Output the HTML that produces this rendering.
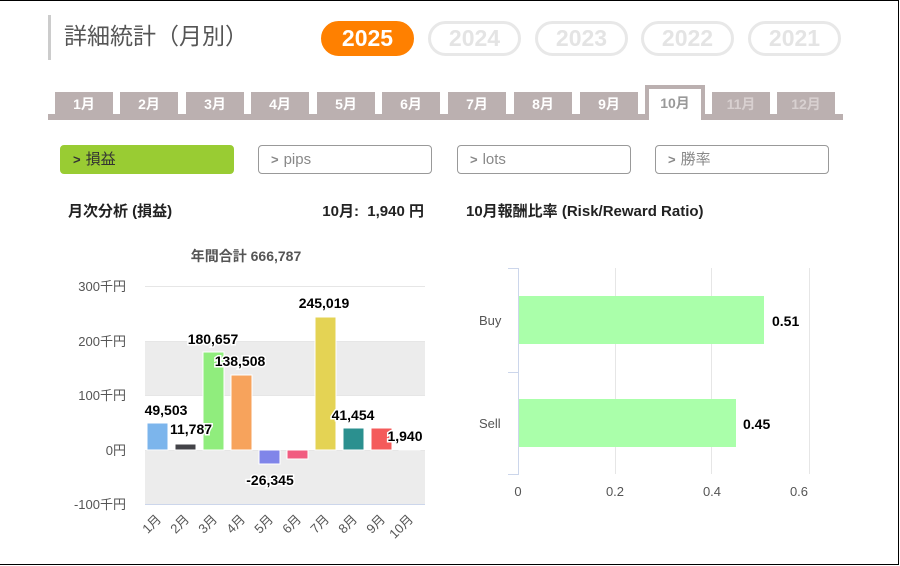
<!DOCTYPE html>
<html><head><meta charset="utf-8"><style>
*{margin:0;padding:0;box-sizing:border-box}
body{width:900px;height:566px;background:#fff;position:relative;overflow:hidden;font-family:"Liberation Sans","Noto Sans CJK JP",sans-serif}
.frame{position:absolute;left:0;top:0;width:899px;height:565px;border:1px solid #000;border-left:none}
.abs{position:absolute}
.title{left:48px;top:15px;height:45px;border-left:3px solid #ccc;padding-left:13px;font-size:23px;color:#555;line-height:42px}
.pill{position:absolute;top:21px;height:35px;width:93px;border-radius:18px;border:3px solid #e8e8e8;color:#e4e4e4;font-weight:bold;font-size:23px;text-align:center;line-height:29px}
.pill.on{background:#ff8000;border-color:#ff8000;color:#fff}
.tab{position:absolute;top:92px;height:24px;width:58px;background:#bbb0b0;color:#fff;font-weight:bold;font-size:14px;text-align:center;line-height:24px}
.tab.dim{color:#d8d0d0}
.btn{position:absolute;top:145px;height:29px;width:174px;border:1px solid #999;border-radius:4px;font-size:15px;color:#888;padding-left:12px;line-height:27px}
.btn b{font-size:13px;margin-right:5px}
.h{position:absolute;top:200px;font-size:15px;font-weight:bold;color:#222}
</style></head><body>
<div class="frame"></div>
<div class="abs title">詳細統計（月別）</div>
<div class="pill on" style="left:321px">2025</div>
<div class="pill" style="left:428px">2024</div>
<div class="pill" style="left:535px">2023</div>
<div class="pill" style="left:641px">2022</div>
<div class="pill" style="left:748px">2021</div>

<div class="abs" style="left:48px;top:114px;width:795px;height:6px;background:#bbb0b0"></div>
<div class="tab" style="left:55px">1月</div>
<div class="tab" style="left:120px">2月</div>
<div class="tab" style="left:186px">3月</div>
<div class="tab" style="left:251px">4月</div>
<div class="tab" style="left:317px">5月</div>
<div class="tab" style="left:382px">6月</div>
<div class="tab" style="left:448px">7月</div>
<div class="tab" style="left:514px">8月</div>
<div class="tab" style="left:580px">9月</div>
<div class="abs" style="left:645px;top:85px;width:60px;height:35px;background:#fff;border:4px solid #bbb0b0;border-bottom:none;color:#999;font-weight:bold;font-size:14px;text-align:center;line-height:28px">10月</div>
<div class="tab dim" style="left:712px">11月</div>
<div class="tab dim" style="left:777px">12月</div>

<div class="btn" style="left:60px;background:#99cc33;border-color:#99cc33;color:#333"><b>&gt;</b>損益</div>
<div class="btn" style="left:258px"><b>&gt;</b>pips</div>
<div class="btn" style="left:457px"><b>&gt;</b>lots</div>
<div class="btn" style="left:655px"><b>&gt;</b>勝率</div>

<div class="h" style="left:68px">月次分析 (損益)</div>
<div class="h" style="right:476px">10月:&nbsp; 1,940 円</div>
<div class="h" style="left:466px">10月報酬比率 (Risk/Reward Ratio)</div>

<svg class="abs" style="left:0;top:0" width="900" height="566" font-family="Liberation Sans,Noto Sans CJK JP,sans-serif">
<text x="246" y="261" font-size="14" font-weight="bold" fill="#555" text-anchor="middle">年間合計 666,787</text>
<rect x="145" y="341" width="280" height="54" fill="#ececec"/>
<rect x="145" y="450" width="280" height="54" fill="#ececec"/>
<g stroke="#e6e6e6"><line x1="145" y1="286.5" x2="425" y2="286.5"/><line x1="145" y1="341.5" x2="425" y2="341.5"/><line x1="145" y1="395.5" x2="425" y2="395.5"/><line x1="145" y1="450.5" x2="425" y2="450.5"/></g>
<line x1="145" y1="504.5" x2="425" y2="504.5" stroke="#ccd6eb"/>
<g font-size="13" fill="#555" text-anchor="end">
<text x="126" y="291">300千円</text><text x="126" y="346">200千円</text><text x="126" y="400">100千円</text><text x="126" y="455">0円</text><text x="126" y="509">-100千円</text></g>
<g stroke="#fff" stroke-width="1">
<rect x="147" y="423" width="21" height="27" fill="#7cb5ec"/>
<rect x="175" y="444" width="21" height="6" fill="#434348"/>
<rect x="203" y="352" width="21" height="98" fill="#90ed7d"/>
<rect x="231" y="375" width="21" height="75" fill="#f7a35c"/>
<rect x="259" y="450" width="21" height="14" fill="#8085e9"/>
<rect x="287" y="450" width="21" height="9" fill="#f15c80"/>
<rect x="315" y="317" width="21" height="133" fill="#e4d354"/>
<rect x="343" y="428" width="21" height="22" fill="#2b908f"/>
<rect x="371" y="428" width="21" height="22" fill="#f45b5b"/>
<rect x="399" y="449" width="21" height="1" fill="#91e8e1"/>
</g>
<g font-size="14" font-weight="bold" fill="#000" text-anchor="middle" stroke="#fff" stroke-width="3" paint-order="stroke">
<text x="166" y="415">49,503</text><text x="191" y="434">11,787</text><text x="213" y="344">180,657</text><text x="240" y="366">138,508</text><text x="270" y="485">-26,345</text><text x="324" y="308">245,019</text><text x="353" y="420">41,454</text><text x="405" y="441">1,940</text></g>
<g font-size="13" fill="#555" text-anchor="end">
<text transform="translate(162,520) rotate(-45)">1月</text><text transform="translate(190,520) rotate(-45)">2月</text><text transform="translate(218,520) rotate(-45)">3月</text><text transform="translate(246,520) rotate(-45)">4月</text><text transform="translate(274,520) rotate(-45)">5月</text><text transform="translate(302,520) rotate(-45)">6月</text><text transform="translate(330,520) rotate(-45)">7月</text><text transform="translate(358,520) rotate(-45)">8月</text><text transform="translate(386,520) rotate(-45)">9月</text><text transform="translate(414,520) rotate(-45)">10月</text></g>

<g stroke="#e6e6e6"><line x1="615.5" y1="268" x2="615.5" y2="474"/><line x1="711.5" y1="268" x2="711.5" y2="474"/><line x1="809.5" y1="268" x2="809.5" y2="474"/></g>
<g stroke="#ccd6eb" fill="none"><path d="M508 268.5H518.5V474.5H508M508 372.5H518"/></g>
<rect x="519" y="296" width="245" height="48" fill="#aaffaa"/>
<rect x="519" y="399" width="217" height="48" fill="#aaffaa"/>
<g font-size="13" fill="#555"><text x="479" y="325">Buy</text><text x="479" y="428">Sell</text></g>
<g font-size="14" font-weight="bold" fill="#000"><text x="772" y="326">0.51</text><text x="743" y="429">0.45</text></g>
<g font-size="13" fill="#555" text-anchor="middle"><text x="518" y="496">0</text><text x="615" y="496">0.2</text><text x="712" y="496">0.4</text><text x="799" y="496">0.6</text></g>
</svg>
</body></html>
